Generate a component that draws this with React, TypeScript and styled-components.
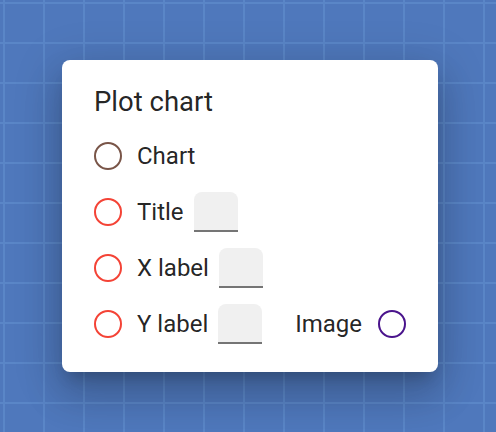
import React from "react";
import styled, { createGlobalStyle } from "styled-components";

const GlobalStyle = createGlobalStyle`
  html, body {
    margin: 0;
    padding: 0;
  }
  body {
    font-family: Roboto, "Liberation Sans", sans-serif;
  }
`;

const Backdrop = styled.div`
  width: 496px;
  height: 432px;
  box-sizing: border-box;
  padding-left: 4px;
  display: flex;
  align-items: center;
  justify-content: center;
  background-color: #4f78bc;
  background-image:
    linear-gradient(to right, #5a86c7 2px, transparent 2px),
    linear-gradient(to bottom, #5a86c7 2px, transparent 2px);
  background-size: 40px 40px;
  background-position: 3px 2px;
`;

const Dialog = styled.div`
  width: 376px;
  height: 312px;
  box-sizing: border-box;
  padding: 24px 32px 0;
  background: #fff;
  border-radius: 8px;
  box-shadow: 0 11px 15px -7px rgba(0, 0, 0, 0.2),
    0 24px 38px 3px rgba(0, 0, 0, 0.14), 0 9px 46px 8px rgba(0, 0, 0, 0.12);
  display: flex;
  flex-direction: column;
`;

const Heading = styled.h2`
  margin: 0 0 8px;
  font-size: 27.5px;
  line-height: 36px;
  font-weight: 400;
  color: rgba(0, 0, 0, 0.87);
`;

const Row = styled.div`
  height: 56px;
  display: flex;
  align-items: center;
`;

const Radio = styled.span<{ $color: string }>`
  width: 28px;
  height: 28px;
  box-sizing: border-box;
  border: 2px solid ${p => p.$color};
  border-radius: 50%;
  flex: none;
`;

const Label = styled.span`
  margin-left: 15px;
  font-size: 24px;
  color: rgba(0, 0, 0, 0.87);
`;

const Field = styled.input`
  width: 44px;
  height: 40px;
  box-sizing: border-box;
  margin-left: 10px;
  border: none;
  border-bottom: 2px solid #757575;
  border-radius: 8px 8px 0 0;
  background: #f0f0f0;
  padding: 0;
  outline: none;
`;

const Trailing = styled.div`
  margin-left: auto;
  display: flex;
  align-items: center;
  gap: 16px;
  font-size: 24px;
  color: rgba(0, 0, 0, 0.87);
`;

const rows = [
  { label: "Chart", color: "#795548", field: false },
  { label: "Title", color: "#f44336", field: true },
  { label: "X label", color: "#f44336", field: true }
];

const App: React.FC<{}> = () => {
  return (
    <>
      <GlobalStyle />
      <Backdrop>
        <Dialog>
          <Heading>Plot chart</Heading>
          {rows.map(row => (
            <Row key={row.label}>
              <Radio $color={row.color} />
              <Label>{row.label}</Label>
              {row.field && <Field />}
            </Row>
          ))}
          <Row>
            <Radio $color="#f44336" />
            <Label>Y label</Label>
            <Field />
            <Trailing>
              <span>Image</span>
              <Radio $color="#4a148c" />
            </Trailing>
          </Row>
        </Dialog>
      </Backdrop>
    </>
  );
};

export default App;
